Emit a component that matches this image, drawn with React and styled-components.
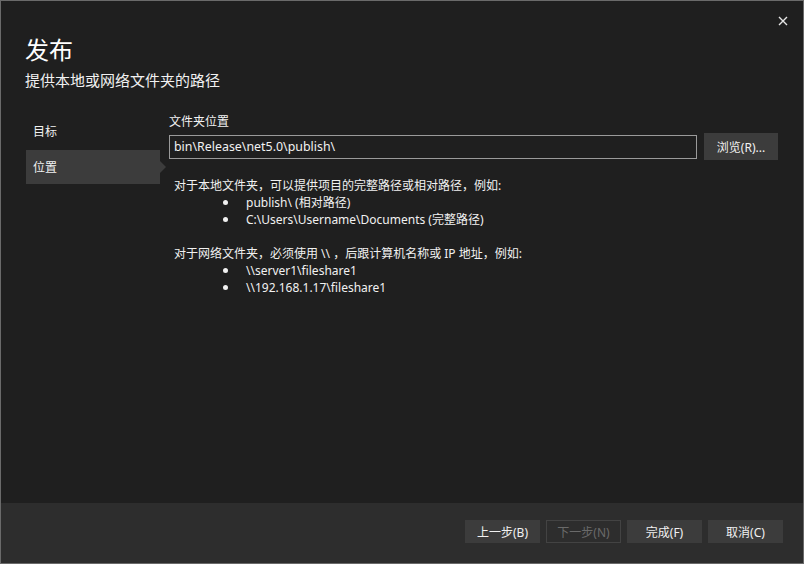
import React from "react";
import styled, { createGlobalStyle } from "styled-components";

const GlobalStyle = createGlobalStyle`
  html, body {
    margin: 0;
    padding: 0;
    background: #1f1f1f;
  }
  * {
    box-sizing: border-box;
  }
`;

const FONT = `"Segoe UI", "Noto Sans", "Noto Sans CJK SC", sans-serif`;

const localExamples = ["publish\\ (相对路径)", "C:\\Users\\Username\\Documents (完整路径)"];
const networkExamples = ["\\\\server1\\fileshare1", "\\\\192.168.1.17\\fileshare1"];

const NAV_ITEMS = ["目标", "位置"];
const ACTIVE_NAV = 1;

const CloseIcon = () => (
  <svg width="10" height="10" viewBox="0 0 10 10">
    <path d="M1 1 L9 9 M9 1 L1 9" stroke="#e6e6e6" strokeWidth="1.4" fill="none" />
  </svg>
);

export default function App() {
  return (
    <>
      <GlobalStyle />
      <Window>
        <CloseButton aria-label="关闭">
          <CloseIcon />
        </CloseButton>

        <Header>
          <Title>发布</Title>
          <Subtitle>提供本地或网络文件夹的路径</Subtitle>
        </Header>

        <Body>
          <Nav>
            {NAV_ITEMS.map((text, index) => (
              <NavItem key={text} $active={index === ACTIVE_NAV}>
                {text}
              </NavItem>
            ))}
          </Nav>

          <Content>
            <FieldLabel>文件夹位置</FieldLabel>
            <InputRow>
              <PathInput defaultValue="bin\Release\net5.0\publish\" />
              <Button $wide>浏览(R)...</Button>
            </InputRow>

            <Help>
              <HelpLine>对于本地文件夹，可以提供项目的完整路径或相对路径，例如:</HelpLine>
              {localExamples.map(t => (
                <Bullet key={t}>
                  <Dot />
                  {t}
                </Bullet>
              ))}
              <Spacer />
              <HelpLine>对于网络文件夹，必须使用 \\ ，后跟计算机名称或 IP 地址，例如:</HelpLine>
              {networkExamples.map(t => (
                <Bullet key={t}>
                  <Dot />
                  {t}
                </Bullet>
              ))}
            </Help>
          </Content>
        </Body>

        <Footer>
          <Button>上一步(B)</Button>
          <Button disabled>下一步(N)</Button>
          <Button>完成(F)</Button>
          <Button>取消(C)</Button>
        </Footer>
      </Window>
    </>
  );
}

const Window = styled.div`
  position: relative;
  width: 804px;
  height: 564px;
  display: flex;
  flex-direction: column;
  background: #1f1f1f;
  border: 1px solid #6a6a6a;
  color: #f1f1f1;
  font-family: ${FONT};
`;

const CloseButton = styled.button`
  position: absolute;
  top: 14px;
  right: 14px;
  width: 12px;
  height: 12px;
  padding: 0;
  border: none;
  background: transparent;
  display: flex;
  align-items: center;
  justify-content: center;
`;

const Header = styled.div`
  padding: 33px 24px 0;
  display: flex;
  flex-direction: column;
  gap: 4px;
`;

const Title = styled.h1`
  margin: 0;
  font-size: 24px;
  line-height: 32px;
  font-weight: 400;
  color: #ffffff;
`;

const Subtitle = styled.div`
  font-size: 15px;
  line-height: 20px;
  color: #f1f1f1;
`;

const Body = styled.div`
  flex: 1;
  display: flex;
  padding: 24px 25px 0 25px;
  gap: 9px;
`;

const Nav = styled.div`
  width: 134px;
  display: flex;
  flex-direction: column;
  gap: 2px;
`;

const NavItem = styled.div`
  position: relative;
  height: 34px;
  padding-left: 7px;
  display: flex;
  align-items: center;
  font-size: 12px;
  color: #f1f1f1;
  background: ${p => (p.$active ? "#3c3c3c" : "transparent")};

  &::after {
    content: "";
    display: ${p => (p.$active ? "block" : "none")};
    position: absolute;
    right: -6px;
    top: 11px;
    border-left: 6px solid #3c3c3c;
    border-top: 6px solid transparent;
    border-bottom: 6px solid transparent;
  }
`;

const Content = styled.div`
  flex: 1;
  display: flex;
  flex-direction: column;
`;

const FieldLabel = styled.div`
  font-size: 12px;
  line-height: 16px;
  color: #f1f1f1;
`;

const InputRow = styled.div`
  margin-top: 3px;
  display: flex;
  align-items: center;
  gap: 7px;
`;

const PathInput = styled.input`
  flex: 1;
  height: 24px;
  padding: 0 4px;
  background: #1f1f1f;
  border: 1px solid #9a9a9a;
  color: #f1f1f1;
  font-family: ${FONT};
  font-size: 12.4px;
  outline: none;
`;

const Button = styled.button`
  width: ${p => (p.$wide ? "74px" : "75px")};
  height: ${p => (p.$wide ? "27px" : "23px")};
  padding: 0;
  font-family: ${FONT};
  font-size: 12px;
  color: #f1f1f1;
  background: #3c3c3c;
  border: 1px solid #3c3c3c;

  &:disabled {
    background: transparent;
    border-color: #434343;
    color: #6a6a6a;
  }
`;

const Help = styled.div`
  margin-top: 17px;
  padding-left: 5px;
  font-size: 12px;
  line-height: 17px;
  color: #f1f1f1;
`;

const HelpLine = styled.div``;

const Bullet = styled.div`
  display: flex;
  align-items: center;
`;

const Dot = styled.span`
  width: 5px;
  height: 5px;
  margin: 0 18px 0 49px;
  border-radius: 50%;
  background: #f1f1f1;
`;

const Spacer = styled.div`
  height: 17px;
`;

const Footer = styled.div`
  height: 60px;
  display: flex;
  justify-content: flex-end;
  align-items: flex-start;
  gap: 6px;
  padding: 17px 20px 0;
  background: #2d2d2d;
`;
